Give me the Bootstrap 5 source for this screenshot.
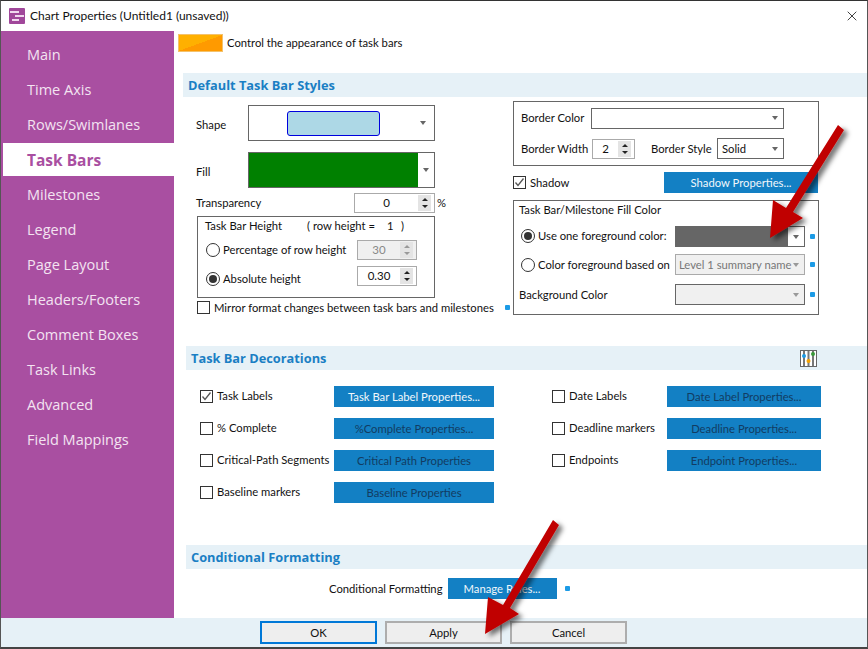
<!DOCTYPE html>
<html><head><meta charset="utf-8"><title>Chart Properties</title>
<link href="https://cdn.jsdelivr.net/npm/bootstrap@5.3.0/dist/css/bootstrap.min.css" rel="stylesheet">
<style>
html,body{margin:0;height:649px;overflow:hidden;background:#fff}
body{font-family:Lato,"Open Sans",sans-serif;font-size:11.25px;line-height:16px;color:#111}
.win{position:relative;width:868px;height:649px;border-top:1px solid #333;border-left:1px solid #555;border-right:1px solid #555;border-bottom:2px solid #444;background:#fff}
.ttl{height:30px;padding-left:8px;font-size:12px}
.ttl svg{margin-right:5px}
.ttl .xbtn{margin-left:auto;margin-right:9px;width:12px;height:12px}
.mid{height:587px}
.side{width:173px;background:#a94fa1;padding-top:6px;flex:none;font-family:"Open Sans",sans-serif}
.side a{display:block;height:35px;margin-left:2px;padding-left:24px;line-height:35px;font-size:14.5px;color:#f3e3f1;text-decoration:none}
.side a.on{background:#fff;color:#a94fa1;font-weight:700;font-size:15.5px;height:33px;line-height:35px;margin-top:1px;margin-bottom:1px}
.mainp{flex:1;min-width:0;position:relative}
.hint{height:42px;padding:3px 0 0 4px;align-items:flex-start}
.swt{width:45px;height:18px;margin-right:4px;background:linear-gradient(160deg,#ffb000 50%,#ff9a00 50%);border:1px solid #f4c26b}
.hint span{line-height:18px}
.shead{height:24px;background:#e6f1f7;color:#1a7fc4;font-family:"Open Sans",sans-serif;font-weight:700;font-size:12.8px;line-height:24px;padding-left:5px;margin-left:9px;align-items:center}
.shead.inset{margin-left:12px}
.colL{width:339px;flex:none;padding-left:22px;padding-top:8px}
.colR{width:306px;flex:none;padding-top:4px}
.lbl{white-space:nowrap}
.shapebox{width:187px;height:36px;border:1px solid #666;margin-left:auto;margin-right:0;position:relative;align-items:center;justify-content:flex-start}
.barS{width:93px;height:25px;background:#add8e6;border:1px solid #0000dd;border-radius:3px;margin-left:38px}
.tri{width:0;height:0;border-left:3.500px solid transparent;border-right:3.500px solid transparent;border-top:4px solid #666;flex:none}
.shaperow{width:239px;margin-bottom:11px;align-items:center}
.shaperow .lbl{margin-right:auto;margin-top:4px}
.fillg{width:169px;height:100%;background:#008000}
.spin{border:1px solid #aaa;height:20px;align-items:center;background:#fff}
.spin i{font-style:normal;flex:1;text-align:center;font-size:11.5px}
.sbtn{width:13px;height:16px;margin-right:3px;flex:none;background:#e4e4e4;display:flex;flex-direction:column;align-items:center;justify-content:space-around;padding:1px 0}
.sbtn b{width:0;height:0;border-left:3px solid transparent;border-right:3px solid transparent}
.sbtn b.u{border-bottom:3px solid #222}
.sbtn b.d{border-top:3px solid #222}
.spin.dis{background:#f0f0f0;color:#888}
.spin.dis .sbtn b.u{border-bottom-color:#999}.spin.dis .sbtn b.d{border-top-color:#999}
.rowT{width:239px;height:20px;align-items:center;margin-top:-6px;margin-bottom:3px}
.pct{width:10px;margin-left:2px;margin-right:-12px;flex:none}
.grpH{width:238px;height:82px;border:1px solid #666;margin-left:1px;padding:0 0 0 8px;position:relative}
.grpH .t{height:17px;line-height:17px;margin-left:-1px}
.grpH .t span{white-space:nowrap}
.rad{width:14px;height:14px;border:1px solid #333;border-radius:50%;flex:none;margin-right:3px;display:flex;align-items:center;justify-content:center;background:#fff}
.rad.on::after{content:"";width:8px;height:8px;border-radius:50%;background:#333}
.chk{width:13px;height:13px;border:1px solid #333;flex:none;margin-right:4px;display:block;position:relative;background:#fff}
.chk svg{position:absolute;left:0;top:0}
.rrow{height:20px;align-items:center}
.rrow .spin{width:60px;margin-left:auto;margin-right:17px}
.rrow.r1{margin-top:6px}
.rrow.r2{margin-top:6px}
.rrow.r2 .rad,.rrow.r2 .lbl{margin-top:5px}
.mir{margin-top:3px;margin-left:1px;height:13px;align-items:center}
.dot{width:5px;height:5px;background:#1c9be6;border-radius:1px;flex:none;display:block}
.grpB{width:306px;height:65px;border:1px solid #666;padding:5px 0 0 7px}
.cmb{height:21px;border:1px solid #666;align-items:center;justify-content:flex-end;background:#fff}
.cmb .tri{margin-right:5px}
.bb{background:#1380c4;color:#f1f7fb;height:21px;border:0;border-radius:0;padding:0;font-size:11.25px;line-height:21px;text-align:center;flex:none;display:block}
.bb.off{color:#123c62}
.shrow{height:21px;align-items:center;margin-top:6px;margin-bottom:7px}
.grpF{width:306px;height:115px;border:1px solid #666;padding:1px 0 0 5px;position:relative}
.frow{align-items:center;height:21px}
.frow .cmb{width:130px;margin-left:auto}
.frow .dot{margin:0 3px 0 5px}
.frow.f1 .rad,.frow.f1>.lbl{margin-bottom:2px}
.deco{padding:16px 0 0 26px;height:175px}
.drow{height:21px;margin-bottom:11px;align-items:center}
.dl{width:134px;align-items:center;flex:none;white-space:nowrap;padding-bottom:1px}
.foot{height:29px;background:#e6f1f7;justify-content:center;align-items:center;position:relative;padding-left:19px}
.fb{width:117px;height:23px;padding:0;line-height:19px;font-size:11.25px;border-radius:0;background:#eee;border:2px solid #adadad;color:#111;flex:none}
.fb.pri{border-color:#0078d7}
.over{position:absolute;left:-1px;top:-1px;pointer-events:none}
</style></head><body>
<div class="win">
 <div class="ttl d-flex align-items-center">
  <svg width="16" height="16" viewBox="0 0 16 16"><rect width="16" height="16" rx="1" fill="#a0479a"/><path d="M1 3h9v2H1zM6 7h9v2H6zM3 11h7v2H3z" fill="#f0d8ee"/></svg>
  <span>Chart Properties (Untitled1 (unsaved))</span>
  <svg class="xbtn" viewBox="0 0 14 14"><path d="M2 2l10 10M12 2L2 12" stroke="#222" stroke-width="1" fill="none"/></svg>
 </div>
 <div class="mid d-flex">
  <nav class="side">
   <a href="#">Main</a><a href="#">Time Axis</a><a href="#">Rows/Swimlanes</a><a href="#" class="on">Task Bars</a><a href="#">Milestones</a><a href="#">Legend</a><a href="#">Page Layout</a><a href="#">Headers/Footers</a><a href="#">Comment Boxes</a><a href="#">Task Links</a><a href="#">Advanced</a><a href="#">Field Mappings</a>
  </nav>
  <div class="mainp">
   <div class="hint d-flex"><div class="swt"></div><span>Control the appearance of task bars</span></div>
   <div class="shead d-flex">Default Task Bar Styles</div>
   <div class="d-flex" style="height:249px">
    <div class="colL">
     <div class="d-flex shaperow"><span class="lbl">Shape</span><div class="shapebox d-flex"><div class="barS"></div><span class="tri ms-auto me-2"></span></div></div>
     <div class="d-flex shaperow"><span class="lbl">Fill</span><div class="shapebox d-flex"><div class="fillg"></div><span class="tri mx-auto"></span></div></div>
     <div class="d-flex rowT" ><span class="lbl">Transparency</span><div class="spin d-flex ms-auto" style="width:81px"><i>0</i><span class="sbtn"><b class="u"></b><b class="d"></b></span></div><span class="lbl pct">%</span></div>
     <div class="grpH">
      <div class="t d-flex"><span style="width:102px">Task Bar Height</span><span style="width:80px">( row height =</span><span style="width:14px">1</span><span>)</span></div>
      <div class="d-flex rrow r1"><span class="rad"></span><span class="lbl">Percentage of row height</span><div class="spin dis d-flex"><i>30</i><span class="sbtn"><b class="u"></b><b class="d"></b></span></div></div>
      <div class="d-flex rrow r2"><span class="rad on"></span><span class="lbl">Absolute height</span><div class="spin d-flex"><i>0.30</i><span class="sbtn"><b class="u"></b><b class="d"></b></span></div></div>
     </div>
     <div class="d-flex mir"><span class="chk"></span><span class="lbl">Mirror format changes between task bars and milestones</span></div>
    </div>
    <div class="colR">
     <div class="grpB">
      <div class="d-flex align-items-center" style="height:22px"><span class="lbl" style="width:70px">Border Color</span><div class="cmb d-flex" style="width:193px"><span class="tri"></span></div></div>
      <div class="d-flex align-items-center" style="height:21px;margin-top:9px"><span class="lbl" style="width:71px">Border Width</span><div class="spin d-flex" style="width:43px"><i>2</i><span class="sbtn"><b class="u"></b><b class="d"></b></span></div><span class="lbl" style="margin-left:16px;width:66px">Border Style</span><div class="cmb d-flex" style="width:67px;justify-content:space-between;padding-left:4px"><span>Solid</span><span class="tri"></span></div></div>
     </div>
     <div class="d-flex shrow"><span class="chk"><svg width="11" height="11" viewBox="0 0 11 11"><path d="M1.500 5.500l2.500 3L9.500 1.500" stroke="#555" stroke-width="1.300" fill="none"/></svg></span><span class="lbl">Shadow</span><button class="btn bb ms-auto" style="width:154px;margin-right:1px">Shadow Properties...</button></div>
     <div class="grpF">
      <div style="height:16px;line-height:16px">Task Bar/Milestone Fill Color</div>
      <div class="d-flex frow f1" style="margin-top:8px"><span class="rad on" style="margin-left:2px"></span><span class="lbl">Use one foreground color:</span><div class="cmb d-flex"><div style="width:112px;height:100%;background:#666;margin-right:auto"></div><span class="tri"></span></div><span class="dot"></span></div>
      <div class="d-flex frow" style="margin-top:7px"><span class="rad" style="margin-left:2px"></span><span class="lbl">Color foreground based on</span><div class="cmb d-flex" style="background:#f0f0f0;border-color:#aaa;color:#777;justify-content:space-between;padding-left:3px;overflow:hidden"><span class="lbl">Level 1 summary name</span><span class="tri" style="border-top-color:#999"></span></div><span class="dot"></span></div>
      <div class="d-flex frow" style="margin-top:9px"><span class="lbl">Background Color</span><div class="cmb d-flex" style="background:#f0f0f0"><span class="tri" style="border-top-color:#999"></span></div><span class="dot"></span></div>
      <span class="dot" style="position:absolute;left:-9px;top:104px"></span>
     </div>
    </div>
   </div>
   <div class="shead inset d-flex">Task Bar Decorations
    <svg class="ms-auto" style="margin-right:50px" width="17" height="17" viewBox="0 0 17 17"><rect x=".5" y=".5" width="16" height="16" fill="#fff" stroke="#666"/><path d="M4 1v15M8.500 1v15M13 1v15" stroke="#777" stroke-width="2"/><circle cx="4" cy="6" r="2" fill="#1c9be6"/><circle cx="8.500" cy="11" r="2" fill="#f5a300"/><circle cx="13" cy="4" r="2" fill="#3a9a3a"/></svg>
   </div>
   <div class="deco d-flex">
    <div style="width:352px">
     <div class="d-flex drow"><div class="dl d-flex"><span class="chk"><svg width="11" height="11" viewBox="0 0 11 11"><path d="M1.500 5.500l2.500 3L9.500 1.500" stroke="#555" stroke-width="1.300" fill="none"/></svg></span>Task Labels</div><button class="btn bb" style="width:160px">Task Bar Label Properties...</button></div>
     <div class="d-flex drow"><div class="dl d-flex"><span class="chk"></span>% Complete</div><button class="btn bb off" style="width:160px">%Complete Properties...</button></div>
     <div class="d-flex drow"><div class="dl d-flex"><span class="chk"></span>Critical-Path Segments</div><button class="btn bb off" style="width:160px">Critical Path Properties</button></div>
     <div class="d-flex drow"><div class="dl d-flex"><span class="chk"></span>Baseline markers</div><button class="btn bb off" style="width:160px">Baseline Properties</button></div>
    </div>
    <div>
     <div class="d-flex drow"><div class="dl d-flex" style="width:115px"><span class="chk"></span>Date Labels</div><button class="btn bb off" style="width:154px">Date Label Properties...</button></div>
     <div class="d-flex drow"><div class="dl d-flex" style="width:115px"><span class="chk"></span>Deadline markers</div><button class="btn bb off" style="width:154px">Deadline Properties...</button></div>
     <div class="d-flex drow"><div class="dl d-flex" style="width:115px"><span class="chk"></span>Endpoints</div><button class="btn bb off" style="width:154px">Endpoint Properties...</button></div>
    </div>
   </div>
   <div class="shead inset d-flex">Conditional Formatting</div>
   <div class="d-flex align-items-center" style="padding-left:155px;margin-top:9px"><span class="lbl" style="margin-right:5px">Conditional Formatting</span><button class="btn bb" style="width:109px">Manage Rules...</button><span class="dot" style="margin-left:8px"></span></div>
  </div>
 </div>
 <div class="foot d-flex">
  <button class="btn fb pri" style="margin-right:8px">OK</button>
  <button class="btn fb" style="margin-right:8px">Apply</button>
  <button class="btn fb">Cancel</button>
 </div>
 <svg class="over" width="868" height="649" viewBox="0 0 868 649">
  <defs><filter id="sh" x="-30%" y="-30%" width="170%" height="170%"><feDropShadow dx="4" dy="3" stdDeviation="2.500" flood-color="#000" flood-opacity=".55"/></filter></defs>
  <path filter="url(#sh)" fill="#c00000" d="M838 125L844 130L793 212L803 218L770 238L773 200L786 208Z"/>
  <path filter="url(#sh)" fill="#c00000" d="M553 520L559 525L510 608L519 614L485 634L488 597L503 605Z"/>
 </svg>
</div>
</body></html>
